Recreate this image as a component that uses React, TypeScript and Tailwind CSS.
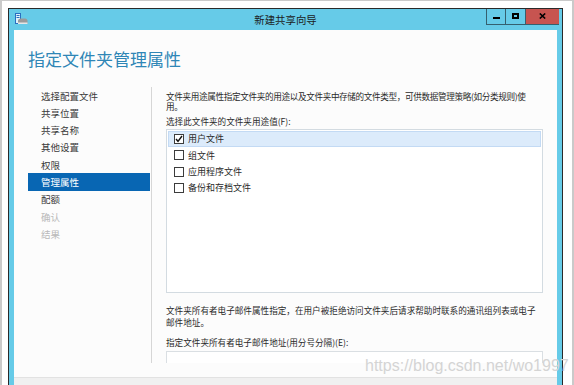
import React from "react";

// ============================================================
// Wizard nav + folder usage values
// ============================================================

const steps = [
  { label: "选择配置文件", state: "done" },
  { label: "共享位置", state: "done" },
  { label: "共享名称", state: "done" },
  { label: "其他设置", state: "done" },
  { label: "权限", state: "done" },
  { label: "管理属性", state: "active" },
  { label: "配额", state: "done" },
  { label: "确认", state: "off" },
  { label: "结果", state: "off" },
];

const usages = [
  { label: "用户文件", checked: true },
  { label: "组文件", checked: false },
  { label: "应用程序文件", checked: false },
  { label: "备份和存档文件", checked: false },
];

const cjk = { fontFamily: '"Noto Sans CJK SC", "Noto Sans", sans-serif' };

function ShareIcon() {
  return (
    <svg width="13" height="12" viewBox="0 0 13 12">
      <rect x="0.5" y="0.5" width="5" height="10" fill="#dff3fb" stroke="#2a6fc0" />
      <rect x="1.5" y="2" width="3" height="1" fill="#2a6fc0" />
      <rect x="1.5" y="4" width="3" height="1" fill="#2a6fc0" />
      <path d="M3 11 L3 8 Q3 5.5 6 5.5 L10 5.5 Q12.5 5.5 12.5 8 L12.5 11 Z" fill="#9a9a9a" />
      <rect x="3" y="9.5" width="9.5" height="1.5" fill="#e6e6e6" />
    </svg>
  );
}

function TitleBar() {
  return (
    <div className="h-[21px] flex items-start relative">
      <div className="pl-[6px] pt-[4px]">
        <ShareIcon />
      </div>
      <div className="absolute left-0 right-0 top-[3px] text-center text-[10.4px] leading-[15px] text-[#1c1c1c]" style={cjk}>
        新建共享向导
      </div>
      <div className="ml-auto mr-[3px] flex h-[16px] border-l border-b border-[#35606f] relative">
        <div className="w-[19px] flex items-center justify-center border-r border-[#35606f] bg-[#66cbe8]">
          <div className="w-[7px] h-[2px] bg-black mt-[2px]" />
        </div>
        <div className="w-[20px] flex items-center justify-center border-r border-[#35606f] bg-[#66cbe8]">
          <div className="w-[7px] h-[6px] border-2 border-black -mt-[2px]" />
        </div>
        <div className="w-[33px] flex items-center justify-center bg-[#c75450]">
          <svg width="7" height="6" viewBox="0 0 7 6" className="-mt-[2px]">
            <path d="M0.8 0.5 L6.2 5.5 M6.2 0.5 L0.8 5.5" stroke="#000" strokeWidth="1.6" />
          </svg>
        </div>
      </div>
    </div>
  );
}

function Checkbox({ checked }: { checked: boolean }) {
  return (
    <div className="w-[10px] h-[10px] border border-[#3c3c3c] bg-white flex items-center justify-center shrink-0">
      {checked && (
        <svg width="8" height="8" viewBox="0 0 8 8">
          <path d="M1 4 L3 6.3 L7 1" stroke="#111" strokeWidth="1.4" fill="none" />
        </svg>
      )}
    </div>
  );
}

function StepNav() {
  return (
    <nav className="ml-[14px] w-[124px] border-r border-[#d6d6d6] shrink-0" style={cjk}>
      {steps.map((s) => (
        <div
          key={s.label}
          className={`h-[17.3px] flex items-center pl-[13px] text-[9.5px] ${
            s.state === "active"
              ? "bg-[#0866b3] text-white mr-px"
              : s.state === "off"
              ? "text-[#b9b9b9]"
              : "text-[#3a3a3a]"
          }`}
        >
          {s.label}
        </div>
      ))}
    </nav>
  );
}

function ManagementProps() {
  return (
    <div className="pl-[14px] pr-[14px] flex-1 text-[#2a2a2a]" style={cjk}>
      <p className="pt-[3.5px] text-[8.6px] leading-[10.5px] whitespace-nowrap tracking-[-0.35px]">
        文件夹用途属性指定文件夹的用途以及文件夹中存储的文件类型，可供数据管理策略(如分类规则)使
        <br />
        用。
      </p>
      <p className="mt-[4px] text-[8.6px] leading-[11px]">选择此文件夹的文件夹用途值(F):</p>

      <div className="mt-[2.5px] h-[164px] border border-[#d3dbe1] bg-white p-px">
        {usages.map((u) => (
          <div
            key={u.label}
            className={`h-[16.3px] flex items-center gap-[4px] pl-[5px] text-[9px] border ${
              u.checked ? "bg-[#dcebfb] border-[#c3daf4]" : "border-transparent"
            }`}
          >
            <Checkbox checked={u.checked} />
            <span>{u.label}</span>
          </div>
        ))}
      </div>

      <p className="mt-[11px] text-[8.6px] leading-[12px] whitespace-nowrap">
        文件夹所有者电子邮件属性指定，在用户被拒绝访问文件夹后请求帮助时联系的通讯组列表或电子
        <br />
        邮件地址。
      </p>
      <p className="mt-[8.5px] text-[8.6px] leading-[11px]">指定文件夹所有者电子邮件地址(用分号分隔)(E):</p>
      <div className="mt-[3.5px] h-[22px] border border-[#dadfe3] bg-white" />
    </div>
  );
}

export default function App() {
  return (
    <div className="w-[574px] h-[385px] overflow-hidden bg-white border-l-2 border-t border-r-2 border-[#cacaca] relative">
      <div className="ml-[6px] mt-[7px] w-[555px] h-[400px] border border-[#2a2a2a] bg-[#66cbe8] flex flex-col">
        <TitleBar />
        <div className="mx-[5px] flex-1 bg-[#fcfcfc] flex flex-col">
          <div className="h-[57px] pl-[14px] pt-[17px]">
            <h1 className="text-[17px] leading-[24px] text-[#2f86b6]" style={cjk}>
              指定文件夹管理属性
            </h1>
          </div>
          <div className="h-[276px] flex overflow-hidden">
            <StepNav />
            <ManagementProps />
          </div>
          <div className="h-[14px]" />
          <div className="flex-1 bg-[#f0f0f0] border-t border-[#e2e2e2]" />
        </div>
      </div>

      {/* watermark over the footer */}
      <div
        className="absolute left-[363px] top-[355px] text-[16px] leading-[20px] text-[#d4d4d4] whitespace-nowrap"
        style={{ fontFamily: '"Liberation Sans", Arial, sans-serif' }}
      >
        https://blog.csdn.net/wo1997
      </div>
    </div>
  );
}
